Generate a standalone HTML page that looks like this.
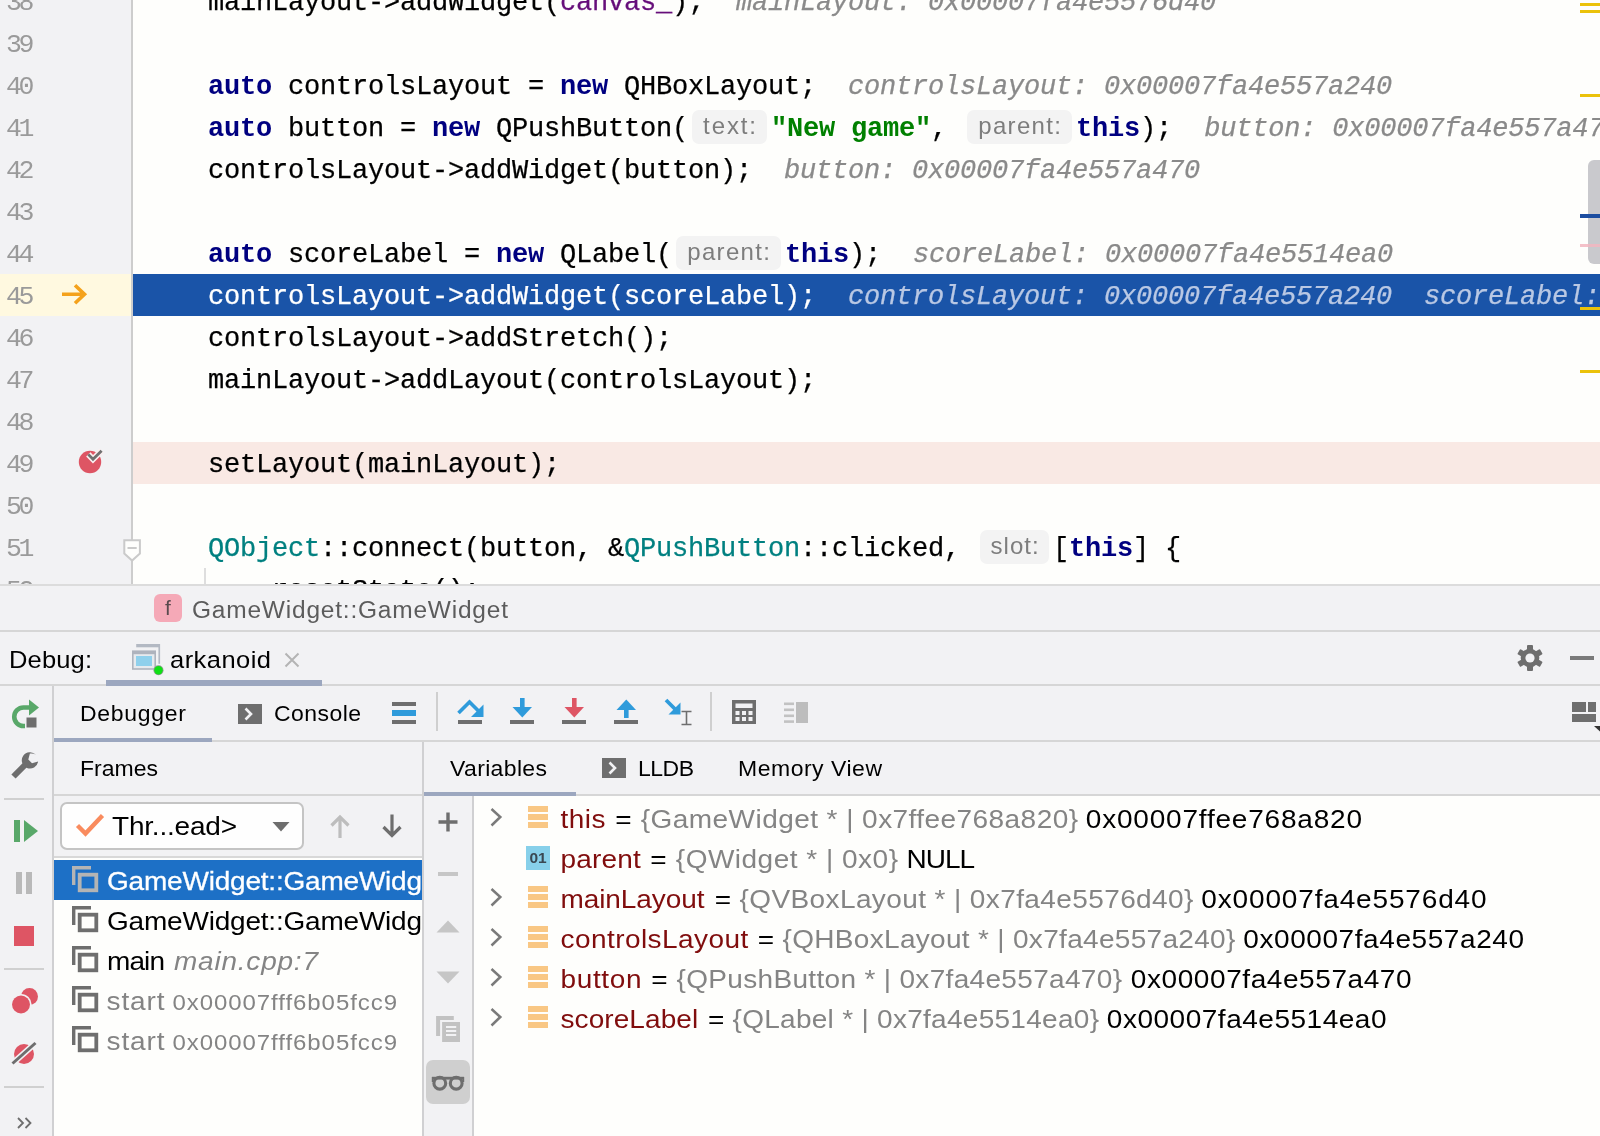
<!DOCTYPE html>
<html>
<head>
<meta charset="utf-8">
<title>CLion Debug</title>
<style>
*{box-sizing:border-box;margin:0;padding:0}
html,body{width:1600px;height:1136px;overflow:hidden;background:#f2f2f4}
body{position:relative;will-change:transform;font-family:"Liberation Sans",sans-serif;color:#000}
.abs{position:absolute}
/* ---------- editor ---------- */
#editor{position:absolute;left:0;top:0;width:1600px;height:585px;background:#fefefc;overflow:hidden}
#gutter{position:absolute;left:0;top:0;width:131px;height:585px;background:#f2f2f4}
#gutsep{position:absolute;left:131px;top:0;width:2px;height:585px;background:#cdcdcd}
.ln{position:absolute;left:6px;margin-top:2px;height:42px;line-height:42px;font-family:"Liberation Mono",monospace;font-size:26.5px;letter-spacing:-3.4px;color:#9a9a9a;white-space:pre}
.cl{position:absolute;left:208px;margin-top:2px;height:42px;line-height:42px;font-family:"Liberation Mono",monospace;font-size:27px;letter-spacing:-0.2026px;color:#000;white-space:pre;-webkit-text-stroke:0.25px currentColor}
.kw{color:#000080;font-weight:bold;-webkit-text-stroke:0}
.st{color:#008000;font-weight:bold;-webkit-text-stroke:0}
.fd{color:#660e7a}
.cls{color:#008080}
.dv{color:#8a8a8a;font-style:italic}
.hint{display:inline-block;vertical-align:top;margin:2px 4px 0 4px;height:34px;line-height:31px;background:#f3f3f3;border-radius:7px;font-family:"Liberation Sans",sans-serif;font-size:24px;color:#7d7d7d;text-align:center;-webkit-text-stroke:0;font-style:normal;font-weight:normal}
/* ---------- panels ---------- */
.hb{position:absolute;left:0;width:1600px;height:2px;background:#d6d6d6}
.vb{position:absolute;width:2px;background:#d0d0d2}
.t{position:absolute;white-space:pre;line-height:30px;height:30px}
.tab{font-size:23px;line-height:29.3px;transform:scaleY(0.957);transform-origin:0 22.26px}
.tab2{font-size:25.5px;line-height:28.74px;transform:scaleY(0.92);transform-origin:0 22.8px}
.bc{font-size:24.5px;line-height:29.6px;transform:scaleY(0.98);transform-origin:0 22.9px}
.row{font-size:28px;line-height:29px;transform:scaleY(0.925);transform-origin:0 23.7px}
.gray{color:#848484}
.vn{color:#800d0d}
</style>
</head>
<body>
<!-- ================= EDITOR ================= -->
<div id="editor">
  <div id="gutter"></div>
  <div class="abs" style="left:0;top:274px;width:131px;height:42px;background:#fff9e0"></div>
  <div id="gutsep"></div>
  <div class="abs" style="left:133px;top:274px;width:1467px;height:42px;background:#1a54a8"></div>
  <div class="abs" style="left:133px;top:442px;width:1467px;height:42px;background:#f9e9e4"></div>
  <div class="ln" style="top:-20px">38</div>
  <div class="ln" style="top:22px">39</div>
  <div class="ln" style="top:64px">40</div>
  <div class="ln" style="top:106px">41</div>
  <div class="ln" style="top:148px">42</div>
  <div class="ln" style="top:190px">43</div>
  <div class="ln" style="top:232px">44</div>
  <div class="ln" style="top:274px">45</div>
  <div class="ln" style="top:316px">46</div>
  <div class="ln" style="top:358px">47</div>
  <div class="ln" style="top:400px">48</div>
  <div class="ln" style="top:442px">49</div>
  <div class="ln" style="top:484px">50</div>
  <div class="ln" style="top:526px">51</div>
  <div class="ln" style="top:568px">52</div>
  <div class="cl" style="top:-20px">mainLayout-&gt;addWidget(<span class="fd">canvas_</span>);  <span class="dv">mainLayout: 0x00007fa4e5576d40</span></div>
  <div class="cl" style="top:64px"><span class="kw">auto</span> controlsLayout = <span class="kw">new</span> QHBoxLayout;  <span class="dv">controlsLayout: 0x00007fa4e557a240</span></div>
  <div class="cl" style="top:106px"><span class="kw">auto</span> button = <span class="kw">new</span> QPushButton(<span class="hint" style="width:75px;letter-spacing:1.9px;text-indent:1.9px">text:</span><span class="st">"New game"</span>, <span class="hint" style="width:105px;letter-spacing:1.3px;text-indent:1.3px">parent:</span><span class="kw">this</span>);  <span class="dv">button: 0x00007fa4e557a470</span></div>
  <div class="cl" style="top:148px">controlsLayout-&gt;addWidget(button);  <span class="dv">button: 0x00007fa4e557a470</span></div>
  <div class="cl" style="top:232px"><span class="kw">auto</span> scoreLabel = <span class="kw">new</span> QLabel(<span class="hint" style="width:105px;letter-spacing:1.3px;text-indent:1.3px">parent:</span><span class="kw">this</span>);  <span class="dv">scoreLabel: 0x00007fa4e5514ea0</span></div>
  <div class="cl" style="top:274px"><span style="color:#fff">controlsLayout-&gt;addWidget(scoreLabel);  <span class="dv" style="color:#b9c8e4">controlsLayout: 0x00007fa4e557a240  scoreLabel: 0x00007fa4e5514ea0</span></span></div>
  <div class="cl" style="top:316px">controlsLayout-&gt;addStretch();</div>
  <div class="cl" style="top:358px">mainLayout-&gt;addLayout(controlsLayout);</div>
  <div class="cl" style="top:442px">setLayout(mainLayout);</div>
  <div class="cl" style="top:526px"><span class="cls">QObject</span>::connect(button, &amp;<span class="cls">QPushButton</span>::clicked, <span class="hint" style="width:69px;letter-spacing:1px;text-indent:1px">slot:</span>[<span class="kw">this</span>] {</div>
  <div class="cl" style="top:568px">    resetState();</div>
  <!-- exec arrow -->
  <svg class="abs" style="left:58px;top:280px" width="32" height="28" viewBox="0 0 32 28"><path d="M4 14.2H26M17 5.2L26.5 14.2L17 23.2" fill="none" stroke="#f4a21c" stroke-width="3.6" stroke-linejoin="miter"/></svg>
  <!-- breakpoint -->
  <svg class="abs" style="left:76px;top:446px" width="30" height="30" viewBox="0 0 30 30"><circle cx="14" cy="16" r="11.2" fill="#de5564"/><path d="M12.3 8.4L17 13.3L25.6 4.7" fill="none" stroke="#fbeff0" stroke-width="6" /><path d="M12.3 8.4L17 13.3L25.6 4.7" fill="none" stroke="#707070" stroke-width="2.8"/></svg>
  <!-- fold marker -->
  <svg class="abs" style="left:120px;top:536px" width="24" height="28" viewBox="0 0 24 28"><path d="M4.3 4.2H19.9V17.6L12.1 24.6L4.3 17.6Z" fill="#fefefc" stroke="#cacaca" stroke-width="2"/><path d="M7.5 12H16.7" stroke="#cacaca" stroke-width="2"/></svg>
  <!-- indent guide -->
  <div class="abs" style="left:204px;top:568px;width:2px;height:20px;background:#dedede"></div>
  <!-- error stripe -->
  <div class="abs" style="left:1588px;top:160px;width:14px;height:104px;background:#c9c9cd;border-radius:6px 0 0 6px"></div>
  <div class="abs" style="left:1580px;top:3px;width:20px;height:3px;background:#ebc20a"></div>
  <div class="abs" style="left:1580px;top:10px;width:20px;height:3px;background:#ebc20a"></div>
  <div class="abs" style="left:1580px;top:94px;width:20px;height:3px;background:#ebc20a"></div>
  <div class="abs" style="left:1580px;top:214px;width:20px;height:4px;background:#1c4da0"></div>
  <div class="abs" style="left:1580px;top:244px;width:20px;height:3px;background:#f2b6bf;opacity:.85"></div>
  <div class="abs" style="left:1580px;top:307px;width:20px;height:3px;background:#ebc20a"></div>
  <div class="abs" style="left:1580px;top:370px;width:20px;height:3px;background:#ebc20a"></div>
</div>
<!-- ================= BREADCRUMB ================= -->
<div class="hb" style="top:584px;background:#dcdcdc"></div>
<div class="abs" style="left:154px;top:594px;width:28px;height:28px;border-radius:6px;background:#f5a9b7;color:#5a4a4e;font-size:21px;line-height:27px;text-align:center">f</div>
<div class="t bc" style="left:192px;top:595px;color:#5c5c5c;letter-spacing:0.783px">GameWidget::GameWidget</div>
<div class="hb" style="top:630px"></div>
<!-- ================= DEBUG HEADER ================= -->
<div class="t tab2" style="left:9px;top:645px;letter-spacing:0.153px">Debug:</div>
<svg class="abs" style="left:130px;top:642px" width="36" height="36" viewBox="0 0 36 36">
  <rect x="6.2" y="2" width="23.8" height="3.3" fill="#b3b9c3"/><rect x="28.4" y="2" width="1.7" height="19.8" fill="#b3b9c3"/>
  <rect x="2" y="8.4" width="24" height="19.4" fill="#aeb3bd"/>
  <rect x="3.6" y="12.2" width="20.8" height="14" fill="#e6eaee"/>
  <rect x="6" y="14" width="16" height="10" fill="#8fd0ec"/>
  <circle cx="28.5" cy="28.3" r="5" fill="#8e9a90"/><circle cx="28.5" cy="28.3" r="4.2" fill="#10e016"/>
</svg>
<div class="t tab2" style="left:170px;top:645px;letter-spacing:0.453px">arkanoid</div>
<svg class="abs" style="left:283px;top:651px" width="18" height="18" viewBox="0 0 18 18"><path d="M2.5 2.5L15.5 15.5M15.5 2.5L2.5 15.5" stroke="#b4b4b4" stroke-width="2"/></svg>
<div class="abs" style="left:106px;top:680px;width:216px;height:6px;background:#9ca7bf"></div>
<div class="hb" style="top:684px;left:0;width:106px"></div>
<div class="hb" style="top:684px;left:322px;width:1278px"></div>
<!-- gear -->
<svg class="abs" style="left:1516px;top:644px" width="28" height="28" viewBox="0 0 28 28">
  <g fill="#6e6e6e"><circle cx="14" cy="14" r="9.3"/>
  <rect x="11" y="1" width="6" height="7" rx="1" transform="rotate(0 14 14)"/><rect x="11" y="1" width="6" height="7" rx="1" transform="rotate(60 14 14)"/><rect x="11" y="1" width="6" height="7" rx="1" transform="rotate(120 14 14)"/><rect x="11" y="1" width="6" height="7" rx="1" transform="rotate(180 14 14)"/><rect x="11" y="1" width="6" height="7" rx="1" transform="rotate(240 14 14)"/><rect x="11" y="1" width="6" height="7" rx="1" transform="rotate(300 14 14)"/>
  </g>
  <circle cx="14" cy="14" r="4.6" fill="#f2f2f4"/>
</svg>
<div class="abs" style="left:1570px;top:656px;width:24px;height:4px;background:#7a7a7a"></div>
<!-- ================= LEFT TOOLBAR ================= -->
<div class="vb" style="left:52px;top:686px;height:450px"></div>
<!-- rerun -->
<svg class="abs" style="left:8px;top:698px" width="34" height="34" viewBox="0 0 34 34">
  <path d="M23 9.5H15.5A9.2 9.2 0 0 0 15.5 28H17" fill="none" stroke="#59a869" stroke-width="4.6"/>
  <path d="M21 1.5L31 9.5L21 17.5Z" fill="#59a869"/>
  <rect x="18.5" y="19.5" width="10" height="10" fill="#6e6e6e"/>
</svg>
<!-- wrench -->
<svg class="abs" style="left:8px;top:750px" width="34" height="34" viewBox="0 0 34 34">
  <path d="M5.5 26.5L18 14" stroke="#6e6e6e" stroke-width="6" stroke-linecap="butt"/>
  <path d="M27.5 3.8A8.2 8.2 0 1 0 29.6 10.6L23.5 12.2L19.8 8.6L21.4 2.6A8.2 8.2 0 0 1 27.5 3.8Z" fill="#6e6e6e" transform="translate(0.5 1)"/>
</svg>
<div class="abs" style="left:4px;top:798px;width:40px;height:2px;background:#d0d0d0"></div>
<!-- resume -->
<svg class="abs" style="left:12px;top:818px" width="28" height="26" viewBox="0 0 28 26"><rect x="2" y="2" width="6" height="22" fill="#59a869"/><path d="M12 2L26 13L12 24Z" fill="#59a869"/></svg>
<!-- pause -->
<svg class="abs" style="left:14px;top:870px" width="20" height="26" viewBox="0 0 20 26"><rect x="2" y="2" width="6" height="22" fill="#b9b9b9"/><rect x="12" y="2" width="6" height="22" fill="#b9b9b9"/></svg>
<!-- stop -->
<div class="abs" style="left:14px;top:926px;width:20px;height:20px;background:#de5564"></div>
<div class="abs" style="left:4px;top:968px;width:40px;height:2px;background:#d0d0d0"></div>
<!-- view breakpoints -->
<svg class="abs" style="left:10px;top:986px" width="30" height="30" viewBox="0 0 30 30"><circle cx="19.5" cy="10.5" r="8.5" fill="#de5564"/><circle cx="11" cy="18.5" r="10.6" fill="#f2f2f4"/><circle cx="11" cy="18.5" r="9" fill="#de5564"/></svg>
<!-- mute breakpoints -->
<svg class="abs" style="left:10px;top:1040px" width="30" height="28" viewBox="0 0 30 28"><circle cx="14" cy="14" r="10" fill="#de5564"/><path d="M2.5 23.5L25.5 3" stroke="#f2f2f4" stroke-width="6"/><path d="M2.5 23.5L25.5 3" stroke="#6e6e6e" stroke-width="3"/></svg>
<div class="abs" style="left:4px;top:1086px;width:40px;height:2px;background:#d0d0d0"></div>
<svg class="abs" style="left:16px;top:1116px" width="18" height="14" viewBox="0 0 18 14"><path d="M2 2L7 7L2 12M9.5 2L14.5 7L9.5 12" fill="none" stroke="#6e6e6e" stroke-width="1.8"/></svg>
<!-- ================= DEBUGGER TAB ROW ================= -->
<div class="t tab" style="left:80px;top:699px;letter-spacing:0.71px">Debugger</div>
<svg class="abs" style="left:238px;top:704px" width="24" height="20" viewBox="0 0 24 20"><rect width="24" height="20" fill="#6e6e6e"/><path d="M7.5 4.5L13 10L7.5 15.5" fill="none" stroke="#f2f2f4" stroke-width="2.6"/></svg>
<div class="t tab" style="left:274px;top:699px;letter-spacing:0.435px">Console</div>
<div class="hb" style="top:740px;left:54px;width:1546px"></div>
<div class="abs" style="left:54px;top:738px;width:158px;height:4px;background:#9ca7bf"></div>
<!-- hamburger -->
<div class="abs" style="left:392px;top:702px;width:24px;height:4px;background:#6e6e6e"></div>
<div class="abs" style="left:392px;top:710px;width:24px;height:6px;background:#2f9bdb"></div>
<div class="abs" style="left:392px;top:720px;width:24px;height:4px;background:#6e6e6e"></div>
<div class="abs" style="left:436px;top:692px;width:2px;height:39px;background:#cfcfcf"></div>
<!-- step over -->
<svg class="abs" style="left:455px;top:696px" width="32" height="32" viewBox="0 0 32 32"><path d="M3.5 17L14.5 6L23.5 15" fill="none" stroke="#2f9bdb" stroke-width="3.6"/><path d="M28.5 8.5V21H16Z" fill="#2f9bdb"/><rect x="3" y="24" width="24" height="4" fill="#6e6e6e"/></svg>
<!-- step into -->
<svg class="abs" style="left:506px;top:696px" width="32" height="32" viewBox="0 0 32 32"><rect x="14" y="2" width="4.6" height="12" fill="#2f9bdb"/><path d="M6.5 11H26L16.3 21.5Z" fill="#2f9bdb"/><rect x="4" y="24" width="24" height="4" fill="#6e6e6e"/></svg>
<!-- force step into -->
<svg class="abs" style="left:558px;top:696px" width="32" height="32" viewBox="0 0 32 32"><rect x="14" y="2" width="4.6" height="12" fill="#de5564"/><path d="M6.5 11H26L16.3 21.5Z" fill="#de5564"/><rect x="4" y="24" width="24" height="4" fill="#6e6e6e"/></svg>
<!-- step out -->
<svg class="abs" style="left:610px;top:696px" width="32" height="32" viewBox="0 0 32 32"><rect x="14" y="11" width="4.6" height="11" fill="#2f9bdb"/><path d="M6.5 14H26L16.3 3.5Z" fill="#2f9bdb"/><rect x="4" y="24" width="24" height="4" fill="#6e6e6e"/></svg>
<!-- run to cursor -->
<svg class="abs" style="left:662px;top:696px" width="34" height="32" viewBox="0 0 34 32"><path d="M4 4L15 15" stroke="#2f9bdb" stroke-width="3.8"/><path d="M18.5 6.5V18.5H6.5Z" fill="#2f9bdb"/><path d="M19.5 15.5H29.5M19.5 28.5H29.5M24.5 15.5V28.5" stroke="#6e6e6e" stroke-width="1.6" fill="none"/></svg>
<div class="abs" style="left:710px;top:692px;width:2px;height:39px;background:#cfcfcf"></div>
<!-- evaluate (calculator) -->
<svg class="abs" style="left:732px;top:700px" width="24" height="24" viewBox="0 0 24 24"><rect width="24" height="24" fill="#6e6e6e"/><g fill="#f2f2f4"><rect x="3.5" y="3.5" width="17" height="4.5"/><rect x="3.5" y="11" width="4" height="4"/><rect x="10" y="11" width="4" height="4"/><rect x="16.5" y="11" width="4" height="4"/><rect x="3.5" y="17" width="4" height="4"/><rect x="10" y="17" width="4" height="4"/><rect x="16.5" y="17" width="4" height="4"/></g></svg>
<!-- last (disabled) -->
<svg class="abs" style="left:784px;top:700px" width="26" height="26" viewBox="0 0 26 26"><g fill="#c2c2c2"><rect x="0" y="2.5" width="10" height="2.6"/><rect x="0" y="8.5" width="10" height="2.6"/><rect x="0" y="14.5" width="10" height="2.6"/><rect x="0" y="20.3" width="10" height="2.6"/></g><rect x="12" y="2" width="12" height="21" fill="#bdbdbd"/></svg>
<!-- layout icon -->
<div class="abs" style="left:1572px;top:702px;width:14px;height:10px;background:#6e6e6e"></div>
<div class="abs" style="left:1588px;top:702px;width:8px;height:10px;background:#6e6e6e"></div>
<div class="abs" style="left:1572px;top:714px;width:24px;height:8px;background:#6e6e6e"></div>
<svg class="abs" style="left:1592px;top:725px" width="8" height="8" viewBox="0 0 8 8"><path d="M2 1H9V7.5Z" fill="#333"/></svg>
<!-- ================= FRAMES ================= -->
<div class="t tab" style="left:80px;top:754px;letter-spacing:0.009px">Frames</div>
<div class="hb" style="top:794px;left:54px;width:1546px"></div>
<div class="vb" style="left:422px;top:742px;height:394px"></div>
<div class="abs" style="left:60px;top:802px;width:244px;height:48px;border:2px solid #c4c4c4;border-radius:7px;background:#fefefe"></div>
<svg class="abs" style="left:74px;top:812px" width="32" height="26" viewBox="0 0 32 26"><path d="M3.5 13.5L11.5 21.5L28.5 3.5" fill="none" stroke="#f98b5e" stroke-width="4.4"/></svg>
<div class="t row" style="left:112px;top:811px;letter-spacing:-0.208px">Thr...ead&gt;</div>
<svg class="abs" style="left:272px;top:822px" width="18" height="10" viewBox="0 0 18 10"><path d="M0.5 0H17.5L9 9.5Z" fill="#6e6e6e"/></svg>
<svg class="abs" style="left:328px;top:813px" width="24" height="26" viewBox="0 0 24 26"><path d="M12 25V4M3.5 12.5L12 4L20.5 12.5" fill="none" stroke="#bdbdbd" stroke-width="3.2"/></svg>
<svg class="abs" style="left:380px;top:813px" width="24" height="26" viewBox="0 0 24 26"><path d="M12 1.5V22.5M3.5 14L12 22.5L20.5 14" fill="none" stroke="#6e6e6e" stroke-width="3.2"/></svg>
<div class="hb" style="top:856px;left:54px;width:368px;background:#d8d8d8"></div>
<div class="abs" style="left:54px;top:858px;width:368px;height:278px;background:#fefefc;overflow:hidden">
  <div class="abs" style="left:0;top:2px;width:368px;height:40px;background:#1d70c6"></div>
</div>
<!-- frame rows -->
<div class="abs" style="left:54px;top:858px;width:368px;height:278px;overflow:hidden">
  <svg class="abs" style="left:16px;top:6px" width="30" height="30" viewBox="0 0 30 30"><path d="M3.7 21V3.7H21" fill="none" stroke="#b4b4b4" stroke-width="3.4"/><rect x="9.7" y="10.7" width="16.6" height="15.6" fill="none" stroke="#b4b4b4" stroke-width="3.8"/></svg>
  <div class="t row" style="left:53px;top:8px;color:#fff;-webkit-text-stroke:0.3px #fff;letter-spacing:-0.207px">GameWidget::GameWidget</div>
  <svg class="abs" style="left:16px;top:46px" width="30" height="30" viewBox="0 0 30 30"><path d="M3.7 21V3.7H21" fill="none" stroke="#6e6e6e" stroke-width="3.4"/><rect x="9.7" y="10.7" width="16.6" height="15.6" fill="none" stroke="#6e6e6e" stroke-width="3.8"/></svg>
  <div class="t row" style="left:53px;top:48px;letter-spacing:-0.207px">GameWidget::GameWidget</div>
  <svg class="abs" style="left:16px;top:86px" width="30" height="30" viewBox="0 0 30 30"><path d="M3.7 21V3.7H21" fill="none" stroke="#6e6e6e" stroke-width="3.4"/><rect x="9.7" y="10.7" width="16.6" height="15.6" fill="none" stroke="#6e6e6e" stroke-width="3.8"/></svg>
  <div class="t row" style="left:53px;top:88px;letter-spacing:-0.901px">main</div>
  <div class="t row gray" style="left:120px;top:88px;font-style:italic;letter-spacing:0.781px">main.cpp:7</div>
  <svg class="abs" style="left:16px;top:126px" width="30" height="30" viewBox="0 0 30 30"><path d="M3.7 21V3.7H21" fill="none" stroke="#6e6e6e" stroke-width="3.4"/><rect x="9.7" y="10.7" width="16.6" height="15.6" fill="none" stroke="#6e6e6e" stroke-width="3.8"/></svg>
  <div class="t row gray" style="left:52.5px;top:128px;letter-spacing:0.883px">start</div>
  <div class="t gray" style="left:118.5px;top:128px;font-size:24px;line-height:32px;height:32px;transform:scaleY(0.9);transform-origin:0 23.9px;letter-spacing:0.933px">0x00007fff6b05fcc9</div>
  <svg class="abs" style="left:16px;top:166px" width="30" height="30" viewBox="0 0 30 30"><path d="M3.7 21V3.7H21" fill="none" stroke="#6e6e6e" stroke-width="3.4"/><rect x="9.7" y="10.7" width="16.6" height="15.6" fill="none" stroke="#6e6e6e" stroke-width="3.8"/></svg>
  <div class="t row gray" style="left:52.5px;top:168px;letter-spacing:0.883px">start</div>
  <div class="t gray" style="left:118.5px;top:168px;font-size:24px;line-height:32px;height:32px;transform:scaleY(0.9);transform-origin:0 23.9px;letter-spacing:0.933px">0x00007fff6b05fcc9</div>
</div>
<!-- ================= VARIABLES ================= -->
<div class="t tab" style="left:450px;top:754px;letter-spacing:0.352px">Variables</div>
<svg class="abs" style="left:602px;top:758px" width="24" height="20" viewBox="0 0 24 20"><rect width="24" height="20" fill="#6e6e6e"/><path d="M7.5 4.5L13 10L7.5 15.5" fill="none" stroke="#f2f2f4" stroke-width="2.6"/></svg>
<div class="t tab" style="left:638px;top:754px;letter-spacing:-0.516px">LLDB</div>
<div class="t tab" style="left:738px;top:754px;letter-spacing:0.511px">Memory View</div>
<div class="abs" style="left:424px;top:792px;width:152px;height:4px;background:#9ca7bf"></div>
<div class="vb" style="left:472px;top:796px;height:340px"></div>
<div class="abs" style="left:474px;top:796px;width:1126px;height:340px;background:#fefefc"></div>
<!-- mini toolbar -->
<svg class="abs" style="left:436px;top:810px" width="24" height="24" viewBox="0 0 24 24"><path d="M12 2.5V21.5M2.5 12H21.5" stroke="#6e6e6e" stroke-width="3.4"/></svg>
<div class="abs" style="left:438px;top:872px;width:20px;height:4px;background:#c6c6c6"></div>
<svg class="abs" style="left:436px;top:919px" width="24" height="14" viewBox="0 0 24 14"><path d="M0.5 13.5L12 1.5L23.5 13.5Z" fill="#c6c6c6"/></svg>
<svg class="abs" style="left:436px;top:971px" width="24" height="14" viewBox="0 0 24 14"><path d="M0.5 0.5L12 12.5L23.5 0.5Z" fill="#c6c6c6"/></svg>
<svg class="abs" style="left:434px;top:1014px" width="28" height="30" viewBox="0 0 28 30"><path d="M4.1 22V4H19.8" fill="none" stroke="#c2c2c2" stroke-width="4"/><rect x="8.1" y="8" width="17.9" height="20" fill="#c2c2c2"/><path d="M12 13.1H22.2M12 17.1H22.2M12 21.1H22.2" stroke="#f2f2f4" stroke-width="2"/></svg>
<div class="abs" style="left:426px;top:1060px;width:44px;height:44px;border-radius:7px;background:#cfcfcf"></div>
<svg class="abs" style="left:430px;top:1072px" width="36" height="22" viewBox="0 0 36 22"><circle cx="9.8" cy="11.2" r="5.9" fill="none" stroke="#6e6e6e" stroke-width="3.1"/><circle cx="26.2" cy="11.2" r="5.9" fill="none" stroke="#6e6e6e" stroke-width="3.1"/><path d="M2 6.2H34" stroke="#6e6e6e" stroke-width="2.8"/><path d="M2.6 5V10M33.4 5V10" stroke="#6e6e6e" stroke-width="1.6"/></svg>
<!-- variable rows -->
<svg class="abs" style="left:488px;top:806px" width="16" height="22" viewBox="0 0 16 22"><path d="M3.5 3L12.3 11L3.5 19.5" fill="none" stroke="#7a7a7a" stroke-width="2.5"/></svg>
<div class="abs" style="left:528px;top:806px;width:20px;height:6px;background:#f9c784"></div><div class="abs" style="left:528px;top:814px;width:20px;height:6px;background:#f9c784"></div><div class="abs" style="left:528px;top:822px;width:20px;height:6px;background:#f9c784"></div>
<div class="t row vn" style="left:560.5px;top:804px;letter-spacing:0.474px">this</div>
<div class="t row" style="left:615.2px;top:804px">=</div>
<div class="t row gray" style="left:640.8px;top:804px;letter-spacing:0.442px">{GameWidget * | 0x7ffee768a820}</div>
<div class="t row" style="left:1085.8px;top:804px;letter-spacing:0.798px">0x00007ffee768a820</div>
<div class="abs" style="left:526px;top:846px;width:24px;height:24px;background:#87d0ea;color:#3a4852;font-size:15.5px;font-weight:bold;line-height:24px;text-align:center;letter-spacing:0">01</div>
<div class="t row vn" style="left:560.5px;top:844px;letter-spacing:0.179px">parent</div>
<div class="t row" style="left:650.2px;top:844px">=</div>
<div class="t row gray" style="left:675.8px;top:844px;letter-spacing:0.495px">{QWidget * | 0x0}</div>
<div class="t row" style="left:906.5px;top:844px;letter-spacing:-1.031px">NULL</div>
<svg class="abs" style="left:488px;top:886px" width="16" height="22" viewBox="0 0 16 22"><path d="M3.5 3L12.3 11L3.5 19.5" fill="none" stroke="#7a7a7a" stroke-width="2.5"/></svg>
<div class="abs" style="left:528px;top:886px;width:20px;height:6px;background:#f9c784"></div><div class="abs" style="left:528px;top:894px;width:20px;height:6px;background:#f9c784"></div><div class="abs" style="left:528px;top:902px;width:20px;height:6px;background:#f9c784"></div>
<div class="t row vn" style="left:560.5px;top:884px;letter-spacing:-0.085px">mainLayout</div>
<div class="t row" style="left:714.7px;top:884px">=</div>
<div class="t row gray" style="left:739.5px;top:884px;letter-spacing:0.395px">{QVBoxLayout * | 0x7fa4e5576d40}</div>
<div class="t row" style="left:1201.3px;top:884px;letter-spacing:0.845px">0x00007fa4e5576d40</div>
<svg class="abs" style="left:488px;top:926px" width="16" height="22" viewBox="0 0 16 22"><path d="M3.5 3L12.3 11L3.5 19.5" fill="none" stroke="#7a7a7a" stroke-width="2.5"/></svg>
<div class="abs" style="left:528px;top:926px;width:20px;height:6px;background:#f9c784"></div><div class="abs" style="left:528px;top:934px;width:20px;height:6px;background:#f9c784"></div><div class="abs" style="left:528px;top:942px;width:20px;height:6px;background:#f9c784"></div>
<div class="t row vn" style="left:560.5px;top:924px;letter-spacing:0.438px">controlsLayout</div>
<div class="t row" style="left:757.7px;top:924px">=</div>
<div class="t row gray" style="left:782.6px;top:924px;letter-spacing:0.307px">{QHBoxLayout * | 0x7fa4e557a240}</div>
<div class="t row" style="left:1243.3px;top:924px;letter-spacing:0.574px">0x00007fa4e557a240</div>
<svg class="abs" style="left:488px;top:966px" width="16" height="22" viewBox="0 0 16 22"><path d="M3.5 3L12.3 11L3.5 19.5" fill="none" stroke="#7a7a7a" stroke-width="2.5"/></svg>
<div class="abs" style="left:528px;top:966px;width:20px;height:6px;background:#f9c784"></div><div class="abs" style="left:528px;top:974px;width:20px;height:6px;background:#f9c784"></div><div class="abs" style="left:528px;top:982px;width:20px;height:6px;background:#f9c784"></div>
<div class="t row vn" style="left:560.5px;top:964px;letter-spacing:0.628px">button</div>
<div class="t row" style="left:651.3px;top:964px">=</div>
<div class="t row gray" style="left:676.5px;top:964px;letter-spacing:0.325px">{QPushButton * | 0x7fa4e557a470}</div>
<div class="t row" style="left:1130.8px;top:964px;letter-spacing:0.58px">0x00007fa4e557a470</div>
<svg class="abs" style="left:488px;top:1006px" width="16" height="22" viewBox="0 0 16 22"><path d="M3.5 3L12.3 11L3.5 19.5" fill="none" stroke="#7a7a7a" stroke-width="2.5"/></svg>
<div class="abs" style="left:528px;top:1006px;width:20px;height:6px;background:#f9c784"></div><div class="abs" style="left:528px;top:1014px;width:20px;height:6px;background:#f9c784"></div><div class="abs" style="left:528px;top:1022px;width:20px;height:6px;background:#f9c784"></div>
<div class="t row vn" style="left:560.5px;top:1004px;letter-spacing:0.08px">scoreLabel</div>
<div class="t row" style="left:708.0px;top:1004px">=</div>
<div class="t row gray" style="left:732.5px;top:1004px;letter-spacing:0.282px">{QLabel * | 0x7fa4e5514ea0}</div>
<div class="t row" style="left:1106.8px;top:1004px;letter-spacing:0.516px">0x00007fa4e5514ea0</div>

</body>
</html>
